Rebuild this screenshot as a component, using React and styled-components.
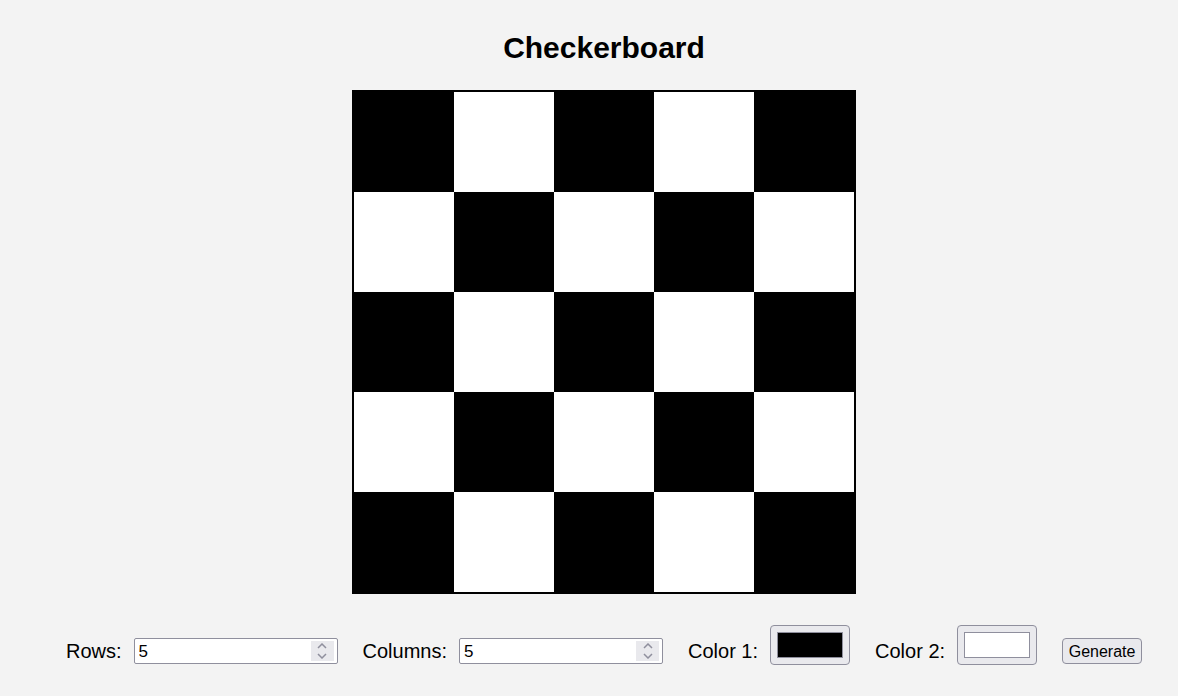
import React, { useState } from "react";
import styled, { createGlobalStyle } from "styled-components";

const GlobalStyle = createGlobalStyle`
  body {
    margin: 0;
    background: #f3f3f3;
    font-family: "Liberation Sans", Arial, sans-serif;
    color: #000;
  }
`;

const SIZE = 5;

const App = () => {
  const [rows] = useState(SIZE);
  const [cols] = useState(SIZE);
  const [color1] = useState("#000000");
  const [color2] = useState("#ffffff");

  const cells = [];
  for (let r = 0; r < rows; r++) {
    for (let c = 0; c < cols; c++) {
      cells.push(
        <Cell key={`${r}-${c}`} color={(r + c) % 2 === 0 ? color1 : color2} />
      );
    }
  }

  return (
    <Page>
      <GlobalStyle />
      <Title>Checkerboard</Title>
      <Board cols={cols}>{cells}</Board>
      <Controls>
        <Label>Rows:</Label>
        <NumberField>
          <NumberInput type="number" defaultValue={rows} />
          <Spinner>
            <Chevron viewBox="0 0 10 6"><path d="M1 5 L5 1 L9 5" /></Chevron>
            <Chevron viewBox="0 0 10 6"><path d="M1 1 L5 5 L9 1" /></Chevron>
          </Spinner>
        </NumberField>
        <Label>Columns:</Label>
        <NumberField>
          <NumberInput type="number" defaultValue={cols} />
          <Spinner>
            <Chevron viewBox="0 0 10 6"><path d="M1 5 L5 1 L9 5" /></Chevron>
            <Chevron viewBox="0 0 10 6"><path d="M1 1 L5 5 L9 1" /></Chevron>
          </Spinner>
        </NumberField>
        <Label>Color 1:</Label>
        <ColorButton type="button">
          <Swatch color={color1} />
        </ColorButton>
        <Label>Color 2:</Label>
        <ColorButton type="button">
          <Swatch color={color2} />
        </ColorButton>
        <Button type="button">Generate</Button>
      </Controls>
    </Page>
  );
};

const Page = styled.div`
  display: flex;
  flex-direction: column;
  align-items: center;
  padding: 31px 0 0 30px;
`;

const Title = styled.h1`
  margin: 0 0 25px;
  font-size: 30px;
  line-height: 34px;
  font-weight: bold;
`;

const Board = styled.div`
  display: grid;
  grid-template-columns: repeat(${(p) => p.cols}, 100px);
  grid-auto-rows: 100px;
  border: 2px solid #000;
  background: #fff;
`;

const Cell = styled.div`
  background: ${(p) => p.color};
`;

const Controls = styled.div`
  display: flex;
  align-items: flex-end;
  margin-top: 31px;
`;

const Label = styled.span`
  font-size: 20px;
  line-height: 23px;
  margin: 0 12px 2px 25px;

  &:first-child {
    margin-left: 0;
  }
`;

const NumberField = styled.div`
  display: flex;
  align-items: stretch;
  width: 204px;
  height: 26px;
  box-sizing: border-box;
  border: 1px solid #8f8f9d;
  border-radius: 2px;
  background: #fff;
  padding: 2px 3px 2px 3px;
  margin-bottom: 1px;
`;

const NumberInput = styled.input`
  flex: 1;
  min-width: 0;
  border: none;
  outline: none;
  padding: 2px 0 0 1px;
  background: transparent;
  font-family: "Liberation Sans", Arial, sans-serif;
  font-size: 17px;
  color: #000;
  appearance: textfield;
  -moz-appearance: textfield;

  &::-webkit-inner-spin-button,
  &::-webkit-outer-spin-button {
    -webkit-appearance: none;
    margin: 0;
  }
`;

const Spinner = styled.div`
  width: 23px;
  display: flex;
  flex-direction: column;
  align-items: center;
  justify-content: center;
  gap: 4px;
  background: #e9e9ed;
`;

const Chevron = styled.svg`
  width: 10px;
  height: 6px;
  fill: none;
  stroke: #8f8f9d;
  stroke-width: 1.5;
`;

const ColorButton = styled.button`
  width: 80px;
  height: 40px;
  box-sizing: border-box;
  padding: 6px;
  border: 1px solid #8f8f9d;
  border-radius: 4px;
  background: #e9e9ed;
  display: flex;
  cursor: pointer;
`;

const Swatch = styled.span`
  flex: 1;
  background: ${(p) => p.color};
  border: 1px solid #8f8f9d;
`;

const Button = styled.button`
  margin: 0 0 1px 25px;
  width: 80px;
  height: 26px;
  box-sizing: border-box;
  padding: 2px 0 0;
  border: 1px solid #8f8f9d;
  border-radius: 4px;
  background: #e9e9ed;
  font-family: "Liberation Sans", Arial, sans-serif;
  font-size: 16px;
  color: #000;
`;

export default App;
